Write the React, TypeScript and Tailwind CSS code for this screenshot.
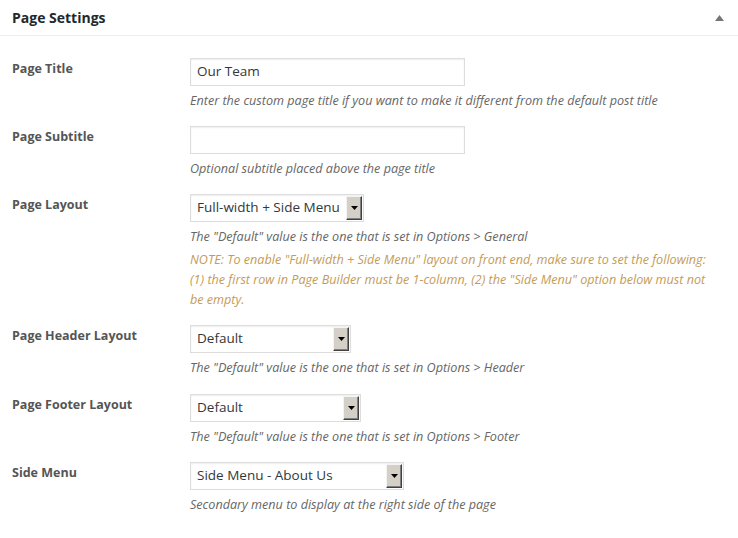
import React from "react";

const font = { fontFamily: '"Open Sans", "Noto Sans", sans-serif' };

function Select({ value, width }: { value: string; width: string }) {
  return (
    <div
      className={`relative h-[28px] ${width} border border-[#dddddd] bg-white shadow-[inset_0_1px_2px_rgba(0,0,0,0.07)] flex items-center`}
    >
      <span className="pl-[6px] text-[13.5px] text-[#32373c] leading-none whitespace-nowrap">{value}</span>
      <div className="absolute right-[1px] top-[1px] bottom-[1px] w-[16px] bg-[#d4d0c8] border-t border-l border-t-[#f4f4f4] border-l-[#f4f4f4] border-r border-b border-r-[#404040] border-b-[#404040] shadow-[inset_-1px_-1px_0_#808080] flex items-center justify-center">
        <svg width="7" height="4" viewBox="0 0 7 4">
          <path d="M0 0h7L3.5 4z" fill="#000" />
        </svg>
      </div>
    </div>
  );
}

function Input({ value, width }: { value: string; width: string }) {
  return (
    <div
      className={`h-[28px] ${width} border border-[#dddddd] bg-white shadow-[inset_0_1px_2px_rgba(0,0,0,0.07)] flex items-center`}
    >
      <span className="pl-[6px] text-[13.5px] text-[#32373c] leading-none">{value}</span>
    </div>
  );
}

function Row({
  label,
  children,
  desc,
  note,
  pb = "pb-[15px]",
}: {
  label: string;
  children: React.ReactNode;
  desc: string;
  note?: string;
  pb?: string;
}) {
  return (
    <div className={`flex ${pb}`}>
      <div className="w-[178px] shrink-0 pt-[1px] text-[12.5px] font-bold text-[#555555] leading-[20px]">{label}</div>
      <div className="flex flex-col">
        {children}
        <p className="mt-[5px] text-[12.6px] italic text-[#666666] leading-[20px] whitespace-nowrap">{desc}</p>
        {note && <p className="mt-[3px] w-[530px] text-[12.6px] italic text-[#c59b55] leading-[20px]">{note}</p>}
      </div>
    </div>
  );
}

export default function App() {
  return (
    <div className="w-[738px] h-[538px] bg-white overflow-hidden" style={font}>
      <div className="h-[36px] border-b border-[#eeeeee] flex items-center justify-between pl-[12px] pr-[14px]">
        <span className="text-[14px] font-bold text-[#23282d]">Page Settings</span>
        <svg width="9" height="6" viewBox="0 0 9 6">
          <path d="M0 6L4.5 0L9 6z" fill="#72777c" />
        </svg>
      </div>
      <div className="pl-[12px] pt-[22px]">
        <Row label="Page Title" desc="Enter the custom page title if you want to make it different from the default post title">
          <Input value="Our Team" width="w-[275px]" />
        </Row>
        <Row label="Page Subtitle" desc="Optional subtitle placed above the page title">
          <Input value="" width="w-[275px]" />
        </Row>
        <Row
          label="Page Layout"
          desc={'The "Default" value is the one that is set in Options > General'}
          note={'NOTE: To enable "Full-width + Side Menu" layout on front end, make sure to set the following: (1) the first row in Page Builder must be 1-column, (2) the "Side Menu" option below must not be empty.'}
        >
          <Select value="Full-width + Side Menu" width="w-[174px]" />
        </Row>
        <Row label="Page Header Layout" pb="pb-[16px]" desc={'The "Default" value is the one that is set in Options > Header'}>
          <Select value="Default" width="w-[161px]" />
        </Row>
        <Row label="Page Footer Layout" desc={'The "Default" value is the one that is set in Options > Footer'}>
          <Select value="Default" width="w-[171px]" />
        </Row>
        <Row label="Side Menu" desc="Secondary menu to display at the right side of the page">
          <Select value="Side Menu - About Us" width="w-[214px]" />
        </Row>
      </div>
    </div>
  );
}
